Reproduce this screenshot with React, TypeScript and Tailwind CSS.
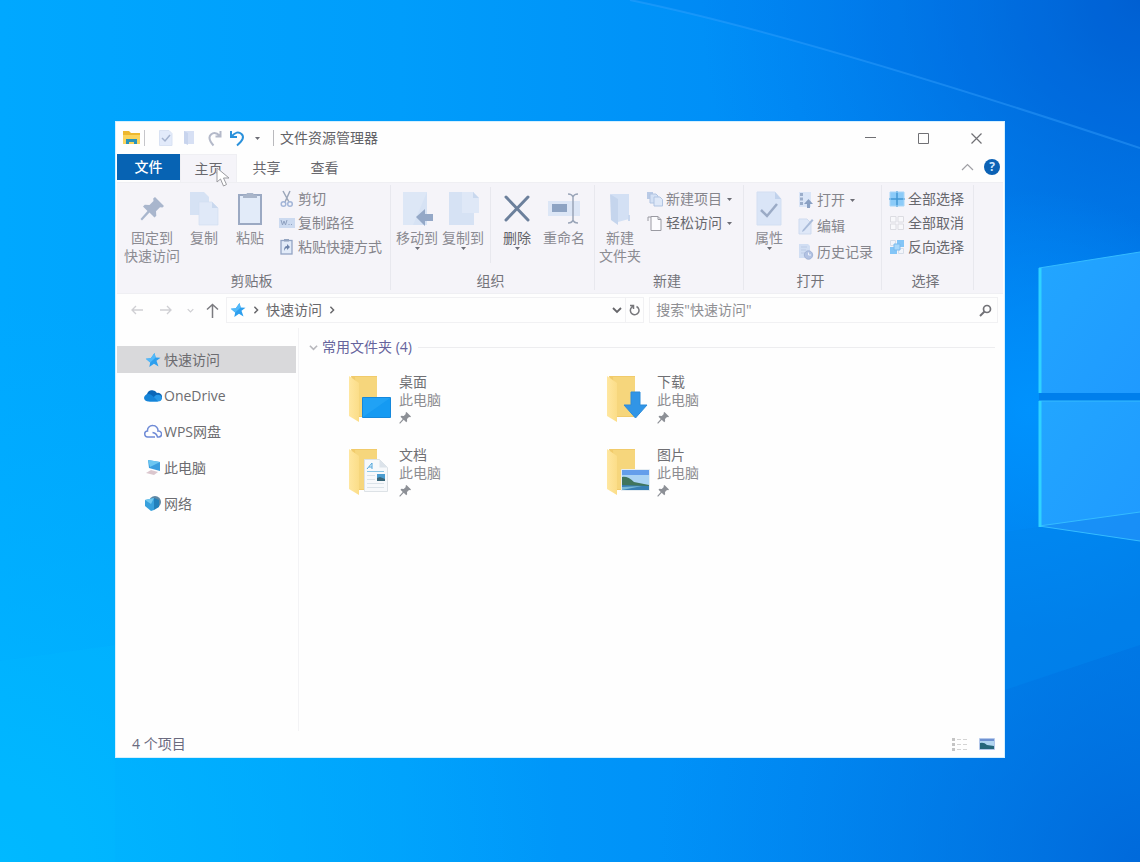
import { ReactNode, useState } from "react";

interface Children {
    children: ReactNode;
}

interface BigButtonProps {
    icon: ReactNode;
    label: string;
    second?: string;
    caret?: boolean;
    className: string;
    dark?: boolean;
}

interface SmallButtonProps {
    icon: ReactNode;
    label: string;
    caret?: boolean;
    dark?: boolean;
    className?: string;
}

const Wallpaper = () => (
    <svg
        className="absolute inset-0 h-full w-full"
        viewBox="0 0 1140 862"
        preserveAspectRatio="xMaxYMid slice"
        aria-hidden="true"
    >
        <defs>
            <linearGradient id="base" x1="0" y1="0" x2="1" y2="0">
                <stop offset="0" stopColor="#00a8ff" />
                <stop offset="0.35" stopColor="#009dfb" />
                <stop offset="0.7" stopColor="#008cf6" />
                <stop offset="1" stopColor="#007eec" />
            </linearGradient>
            <radialGradient id="corner" cx="1140" cy="0" r="440" gradientUnits="userSpaceOnUse">
                <stop offset="0" stopColor="#005acc" stopOpacity="0.85" />
                <stop offset="1" stopColor="#0070e8" stopOpacity="0" />
            </radialGradient>
            <radialGradient id="low" cx="1140" cy="862" r="480" gradientUnits="userSpaceOnUse">
                <stop offset="0" stopColor="#0066d8" stopOpacity="0.85" />
                <stop offset="1" stopColor="#007ce4" stopOpacity="0" />
            </radialGradient>
            <radialGradient id="glow" cx="0" cy="862" r="560" gradientUnits="userSpaceOnUse">
                <stop offset="0" stopColor="#00b8ff" />
                <stop offset="1" stopColor="#00b2ff" stopOpacity="0" />
            </radialGradient>
            <radialGradient id="halo" cx="1030" cy="410" r="220" gradientUnits="userSpaceOnUse">
                <stop offset="0" stopColor="#0094ff" stopOpacity="0.9" />
                <stop offset="1" stopColor="#0094ff" stopOpacity="0" />
            </radialGradient>
            <linearGradient id="pane" x1="0" y1="0" x2="1" y2="1">
                <stop offset="0" stopColor="#22a6ff" />
                <stop offset="1" stopColor="#1f9aff" />
            </linearGradient>
        </defs>
        <rect width="1140" height="862" fill="url(#base)" />
        <rect width="1140" height="862" fill="url(#glow)" />
        <rect width="1140" height="862" fill="url(#corner)" />
        <rect width="1140" height="862" fill="url(#low)" />
        <rect width="1140" height="862" fill="url(#halo)" />
        <path d="M630 0Q800 35 1140 148V0Z" fill="#0066dd" fillOpacity="0.12" />
        <path d="M630 0Q800 35 1140 148" fill="none" stroke="#3aa4ff" strokeOpacity="0.4" strokeWidth="2" />
        <path d="M0 661L115 645V862H0Z" fill="#00c0ff" fillOpacity="0.15" />
        <path d="M1005 532L1040 527L1140 541V645L1005 690Z" fill="#0086ee" fillOpacity="0.5" />
        <path d="M1039 268L1140 252V393H1039Z" fill="url(#pane)" />
        <path d="M1039 401H1140V541L1039 526Z" fill="url(#pane)" />
        <path d="M1039 526L1140 512V541Z" fill="#1487f2" fillOpacity="0.6" />
        <path d="M1039 393H1140V401H1039Z" fill="#007fec" />
        <path d="M1039 268L1140 252M1039 401H1140M1039 526L1140 512M1039 526L1140 541" fill="none" stroke="#35bcff" />
        <path d="M1040 268V393M1040 401V527" stroke="#2fd2ff" strokeWidth="3" />
    </svg>
);

const Star = () => (
    <svg width="16" height="16" viewBox="0 0 16 16">
        <path d="M9.5 1l1.2 4.5 4.8.2-4 3 2 5.8-4.5-2.8L4.3 15l.9-4.5L.8 6.8l5-.6z" fill="#2d9fee" />
        <path d="M9.5 1l1.2 4.5-5.5 5L.8 6.8l5-.6z" fill="#52b9fa" />
    </svg>
);

const Pin = ({ className, fill }: { className: string; fill: string }) => (
    <svg className={className} viewBox="0 0 24 24" fill={fill}>
        <path d="M15 0l9 9-1.500 1.500-2.500-.3-4 4 .3 4.500-1.800 1.800-5-5L2 23.500.5 22l7-8L3 9.500l1.800-1.800 4.700.3 4-4-.3-2.500z" />
    </svg>
);

const Caret = () => (
    <svg width="5" height="3" viewBox="0 0 5 3">
        <path d="M0 0h5L2.5 3z" fill="#6d6d75" />
    </svg>
);

const Chevron = ({ color, size, rotate }: { color: string; size: number; rotate?: string }) => (
    <svg width={size} height={size} viewBox="0 0 10 10" className={rotate}>
        <path d="M1 3l4 4 4-4" fill="none" stroke={color} strokeWidth="1.8" />
    </svg>
);

const CopyIcon = () => (
    <svg className="h-9 w-[30px]" viewBox="0 0 30 36">
        <path d="M1 1h14l5 5v18H1z" fill="#d6e2f4" />
        <path d="M10 11h13l6 6v17H10z" fill="#e0e9f8" stroke="#d3dff2" strokeWidth="0.7" />
        <path d="M23 11v6h6z" fill="#c9d8ee" />
    </svg>
);

const PasteIcon = () => (
    <svg className="h-9 w-[26px]" viewBox="0 0 26 36">
        <rect x="2" y="4" width="22" height="29" fill="#e2ebf9" stroke="#9ba9c3" strokeWidth="2" />
        <path d="M6 4h3l1-2h6l1 2h3v3H6z" fill="#a9b5ca" />
    </svg>
);

const MoveIcon = () => (
    <svg className="h-9 w-8" viewBox="0 0 32 36">
        <path d="M2 1h24v33H2z" fill="#d6e2f4" />
        <path d="M2 1h24L12 34H2z" fill="#dde7f6" />
        <path d="M15 26l9-8v5h8v7h-8v5z" fill="#94a8c7" />
    </svg>
);

const CopyToIcon = () => (
    <svg className="h-9 w-8" viewBox="0 0 32 36">
        <path d="M2 1h25v33H2z" fill="#d6e2f4" />
        <path d="M15 1h11l6 6v15H15z" fill="#dfe8f7" />
        <path d="M26 1v6h6z" fill="#c9d8ee" />
    </svg>
);

const DeleteIcon = () => (
    <svg className="h-9 w-[26px]" viewBox="0 0 26 36">
        <path d="M2 6l22 23M24 6L2 29" stroke="#6c809c" strokeWidth="3" strokeLinecap="round" />
    </svg>
);

const RenameIcon = () => (
    <svg className="h-9 w-[34px]" viewBox="0 0 34 36">
        <path d="M1 10h32v15H1z" fill="#dce6f6" />
        <path d="M5 13h15v8H5z" fill="#8da3c3" />
        <path d="M21 3q4 0 5 3 1-3 5-3M26 5v25M21 32q4 0 5-3 1 3 5 3" fill="none" stroke="#9aa5b8" strokeWidth="1.5" />
    </svg>
);

const NewFolderIcon = () => (
    <svg className="h-9 w-6" viewBox="0 0 24 36">
        <path d="M3 3h18v25l-11 3z" fill="#d3e0f4" />
        <path d="M20 24h2v6h-2z" fill="#c9d8ef" />
        <path d="M2 3l8 5v26l-7-5z" fill="#c5d5ed" />
    </svg>
);

const PropertiesIcon = () => (
    <svg className="h-9 w-[26px]" viewBox="0 0 26 36">
        <path d="M1 1h18l6 7v26H1z" fill="#dae5f7" stroke="#d3dff2" />
        <path d="M19 1v7h6z" fill="#c1d2ec" />
        <path d="M5 19l6 6 10-12" fill="none" stroke="#9babc6" strokeWidth="2.5" />
    </svg>
);

const ScissorsIcon = () => (
    <svg width="16" height="18" viewBox="0 0 16 18" fill="none">
        <path d="M4 1l6 11M11 1L6 12" stroke="#9ba6b9" strokeWidth="1.5" />
        <circle cx="4.5" cy="14" r="2.3" stroke="#a4b6d8" strokeWidth="1.5" />
        <circle cx="11" cy="14" r="2.3" stroke="#a4b6d8" strokeWidth="1.5" />
    </svg>
);

const PathIcon = () => (
    <svg width="16" height="12" viewBox="0 0 16 12">
        <path d="M0 1h16v10H0z" fill="#ccdaf0" />
        <path d="M2 3l1.5 5L5 4l1.5 4L8 3M9.5 7.500h1M12 7.500h1" stroke="#8fa1c0" fill="none" />
    </svg>
);

const PasteLinkIcon = () => (
    <svg width="16" height="18" viewBox="0 0 16 18">
        <rect x="2" y="2.5" width="11" height="13.5" fill="#e2ebf9" stroke="#92a4c4" strokeWidth="1.3" />
        <path d="M5 1h5v2.500H5z" fill="#93a4c0" />
        <path d="M5 13q0-5 3-5V6l3 3-3 3v-2q-2 0-3 3" fill="#6c83aa" />
    </svg>
);

const NewItemIcon = () => (
    <svg width="16" height="16" viewBox="0 0 16 16">
        <path d="M0 1h6v7H0z" fill="#b9cae6" />
        <path d="M3 3h6l2 2v7H3z" fill="#d4e1f5" stroke="#b1c4e2" />
        <path d="M7 6h6l2.5 2.5V15H7z" fill="#dee8f8" stroke="#b1c4e2" />
    </svg>
);

const EasyAccessIcon = () => (
    <svg width="16" height="18" viewBox="0 0 16 18">
        <path d="M4 2.500h7l3 3v11H4z" fill="#fcfcfe" stroke="#9a9aa2" />
        <path d="M11 2.500v3h3M1 7V3h3" fill="none" stroke="#9a9aa2" />
    </svg>
);

const OpenIcon = () => (
    <svg width="16" height="18" viewBox="0 0 16 18">
        <path d="M1 1h12v15H1z" fill="#dae5f7" />
        <path d="M2 2h3v3H2zM2 6.500h3v3H2zM2 11h3v3H2z" fill="#9badca" />
        <path d="M10.5 8l4.5 5h-3v4H9v-4H6z" fill="#8aa0c3" />
    </svg>
);

const EditIcon = () => (
    <svg width="16" height="18" viewBox="0 0 16 18">
        <path d="M1 2h8l4 4v11H1z" fill="#dfe8f8" stroke="#cfdbef" />
        <path d="M14 2l1.5 1.5L6 14l-2 1 .6-2z" fill="#a9bbd9" />
    </svg>
);

const HistoryIcon = () => (
    <svg width="16" height="18" viewBox="0 0 16 18">
        <path d="M1 1h9l2 2v12H1z" fill="#d1def3" />
        <path d="M3 4h6M3 7h5M3 10h4" stroke="#bccbe5" />
        <circle cx="10.5" cy="12" r="4.2" fill="#b2c2e3" stroke="#a3b4d6" />
        <path d="M10.5 9.500V12H13" fill="none" stroke="#eff3fb" />
    </svg>
);

const SelectAllIcon = () => (
    <svg width="16" height="16" viewBox="0 0 16 16">
        <path d="M1 1h14v14H1z" fill="#8ccbf8" />
        <path d="M8 0v16M0 8h16" stroke="#4398d3" strokeWidth="1.5" />
        <path d="M1 1h14v14H1z" fill="none" stroke="#a8d6f8" />
    </svg>
);

const SelectNoneIcon = () => (
    <svg width="16" height="16" viewBox="0 0 16 16" fill="#f8f8fb" stroke="#dcdce2">
        <path d="M1.500 1.500h5.500v5.500h-5.500zM9 1.500h5.500v5.500H9zM1.500 9h5.500v5.500h-5.500zM9 9h5.500v5.500H9z" />
    </svg>
);

const InvertIcon = () => (
    <svg width="16" height="16" viewBox="0 0 16 16">
        <path d="M1.500 1.500h5v5h-5zM9.500 9.500h5v5h-5z" fill="#f2f5fb" stroke="#d6dde8" />
        <path d="M8 1h7v7H8zM1 8h7v7H1z" fill="#83c5f7" />
        <path d="M5 5h6v6H5z" fill="#a9d8fa" stroke="#79baee" />
    </svg>
);

const FolderArt = ({ children }: Children) => (
    <svg className="shrink-0" width="43" height="50" viewBox="0 -1 43 50">
        <defs>
            <linearGradient id="flap" x1="0" y1="0" x2="1" y2="0">
                <stop offset="0" stopColor="#ffe7a0" />
                <stop offset="1" stopColor="#fbdd88" />
            </linearGradient>
        </defs>
        <path d="M2 2h26v41H9z" fill="#f1cb6b" />
        <path d="M6 3h22v39H9z" fill="#f6d67c" />
        <path d="M0 2l10 7v39l-10-6z" fill="url(#flap)" />
        {children}
    </svg>
);

const DesktopFolder = () => (
    <FolderArt>
        <path d="M13.500 23.500h28v20h-28z" fill="#159af2" stroke="#1588dc" />
        <path d="M14 43V24h27z" fill="#32aefb" fillOpacity="0.4" />
    </FolderArt>
);

const DownloadFolder = () => (
    <FolderArt>
        <path d="M24 18h9v13h7L28.500 44 17 31h7z" fill="#3195e6" stroke="#2d8cda" />
    </FolderArt>
);

const DocumentFolder = () => (
    <FolderArt>
        <path d="M15.500 12.500h15l8 8v24h-23z" fill="#f7f9fb" stroke="#dde2e6" />
        <path d="M30.500 12.500v8h8z" fill="#dce3ea" />
        <path d="M18 22l5-6v6M20 20h3" fill="none" stroke="#52a7dc" />
        <path d="M18 24.500h17" stroke="#8bc6e5" />
        <path d="M18 28.500h8M18 32.500h8M18 36.500h17M18 40.500h17" stroke="#dbe3e9" />
        <path d="M28 27h8v7h-8z" fill="#4b9dd0" />
        <path d="M28 34v-3l3-1 5 2v2z" fill="#396678" />
    </FolderArt>
);

const PictureFolder = () => (
    <FolderArt>
        <path d="M14.500 22.500h28v21h-28z" fill="#a9d3f4" stroke="#e6edf2" />
        <path d="M15 23h27v5H15z" fill="#639eeb" />
        <path d="M15 30q6-1 12 5l15 3v3H15z" fill="#40755d" />
        <path d="M15 38l27 1v4H15z" fill="#377fb4" />
        <path d="M15 40l20-1-20 4z" fill="#79b9d6" />
    </FolderArt>
);

const OneDriveIcon = () => (
    <svg width="18" height="14" viewBox="0 0 18 14">
        <path d="M4 12A4 4 0 0 1 3 5a5.500 5.500 0 0 1 10-1 4 4 0 0 1 2 8z" fill="#0a66b8" />
        <path d="M5 12.500l7-6.500q5-1 6 3-.5 3.500-4 3.500z" fill="#2798e8" />
        <path d="M0 8.500q1-3.500 5-3.500 4 1 9 7.500H4Q0 12 0 8.500z" fill="#1584d8" />
    </svg>
);

const WpsIcon = () => (
    <svg width="18" height="15" viewBox="0 0 18 15" fill="none" stroke="#6f8bd6" strokeWidth="1.5">
        <path d="M11 13H4a3 3 0 0 1-.5-6A5 5 0 0 1 9 1.500a5 5 0 0 1 5 5.500 3 3 0 0 1 1 6h-1.500q-1-4-5-4.500" />
    </svg>
);

const ComputerIcon = () => (
    <svg width="18" height="17" viewBox="0 0 18 17">
        <path d="M4 1l12 2v9L5 9z" fill="#3a9edf" />
        <path d="M4 1l12 2L6 8z" fill="#6bc6f1" />
        <path d="M2 14l5-3 7 2-4 3z" fill="#dbc7ce" />
    </svg>
);

const NetworkIcon = () => (
    <svg width="18" height="17" viewBox="0 0 18 17">
        <circle cx="11" cy="7" r="6" fill="#5e87a4" />
        <path d="M1 5l9-2v12l-3 1-6-5z" fill="#38a1dd" />
        <path d="M10 3l5 2v7l-5 3z" fill="#2280bb" />
        <path d="M1 5l9-2-3 6z" fill="#72c8ef" />
    </svg>
);

const ViewThumb = () => (
    <svg width="16" height="12" viewBox="0 0 16 12">
        <path d="M.5.500h15v11H.5z" fill="#b2d6f1" stroke="#b4c8ea" />
        <path d="M1 1h14v2H1z" fill="#6f92d2" />
        <path d="M1 5q4-1 7 2l7 1v3H1z" fill="#26677a" />
    </svg>
);

const BigButton = ({ icon, label, second, caret, className, dark }: BigButtonProps) => (
    <button
        type="button"
        className={`flex flex-col items-center pt-1.5 whitespace-nowrap leading-[18px] ${
            dark ? "text-[#626268]" : "text-[#8b8b92]"
        } ${className}`}
    >
        <span className="mb-0.5 flex h-9 items-center">{icon}</span>
        <span>{label}</span>
        {second && <span>{second}</span>}
        {caret && <Caret />}
    </button>
);

const SmallButton = ({ icon, label, caret, dark, className = "h-6" }: SmallButtonProps) => (
    <button
        type="button"
        className={`flex items-center gap-[3px] whitespace-nowrap ${
            dark ? "text-[#68686e]" : "text-[#85858c]"
        } ${className}`}
    >
        <span className="flex w-4 justify-center">{icon}</span>
        {label}
        {caret && (
            <span className="ml-0.5">
                <Caret />
            </span>
        )}
    </button>
);

const Group = ({ title, width, children }: Children & { title: string; width: string }) => (
    <section
        className={`flex shrink-0 flex-col justify-between border-r border-[#e8e8ee] ${width}`}
    >
        <div className="flex items-start">{children}</div>
        <h2 className="pr-1 text-center leading-[18px] text-[#737379]">{title}</h2>
    </section>
);

const TitleBar = () => (
    <header className="flex h-8 items-center">
        <svg className="ml-1.5" width="17" height="16" viewBox="0 0 17 16">
            <path d="M0 1h6l2 2h9v11H0z" fill="#eeb82f" />
            <path d="M0 5h17v9H0z" fill="#fbd45d" />
            <path d="M3 14V9h11v5h-3v-2H6v2z" fill="#2b93b9" />
        </svg>
        <span className="ml-1 h-4 w-px bg-[#c6c6ca]" />
        <button type="button" aria-label="属性" className="ml-3.5">
            <svg width="14" height="16" viewBox="0 0 14 16">
                <path d="M.5.500H10l3 3v12H.5z" fill="#e2eafa" stroke="#d9e2f3" />
                <path d="M3 8l3 3 5-6" fill="none" stroke="#a4b2ce" strokeWidth="1.5" />
            </svg>
        </button>
        <button type="button" aria-label="新建文件夹" className="ml-2.5">
            <svg width="12" height="16" viewBox="0 0 12 16">
                <path d="M1 1h10v13H1z" fill="#d7e0f4" />
                <path d="M1 1l4 2v12l-4-2z" fill="#c8d4ed" />
            </svg>
        </button>
        <button type="button" aria-label="恢复" className="ml-3">
            <svg width="16" height="17" viewBox="0 0 16 17" fill="none" stroke="#b4b9c9" strokeWidth="2">
                <path d="M13.500 1v5.500H8.500M13 6Q8 1 4 4.500T6.500 15.500" />
            </svg>
        </button>
        <button type="button" aria-label="撤消" className="ml-1.5">
            <svg width="17" height="17" viewBox="0 0 17 17" fill="none" stroke="#2b91db" strokeWidth="2">
                <path d="M2 1v6h6M2.500 6.500Q8 0 12.500 4T8 15.500" />
            </svg>
        </button>
        <button type="button" aria-label="自定义快速访问工具栏" className="ml-[9px]">
            <Caret />
        </button>
        <span className="ml-[13px] h-4 w-px bg-[#b9b9bd]" />
        <h1 className="ml-1.5 flex-1 text-[#626266]">文件资源管理器</h1>
        <div className="flex h-full text-[#707074]">
            <button type="button" aria-label="最小化" className="flex w-[53px] items-center justify-center">
                <svg width="11" height="11" viewBox="0 0 11 11">
                    <path d="M0 4.500h11" stroke="currentColor" />
                </svg>
            </button>
            <button type="button" aria-label="最大化" className="flex w-[53px] items-center justify-center">
                <svg width="11" height="11" viewBox="0 0 11 11">
                    <path d="M.5.500h10v10H.5z" fill="none" stroke="currentColor" />
                </svg>
            </button>
            <button type="button" aria-label="关闭" className="flex w-[53px] items-center justify-center">
                <svg width="11" height="11" viewBox="0 0 11 11">
                    <path d="M.5.500l10 10M10.500.500l-10 10" stroke="currentColor" strokeWidth="1.2" />
                </svg>
            </button>
        </div>
    </header>
);

const Tabs = () => (
    <nav className="flex h-7 items-start text-[#68686d]">
        <button type="button" className="h-[26px] w-[63px] bg-[#0763b3] font-medium text-white">
            文件
        </button>
        <button
            type="button"
            className="relative h-7 w-[57px] border-x border-t border-[#efeff3] bg-[#f5f4f9]"
        >
            主页
            <svg
                className="absolute top-3 left-[35px]"
                width="15"
                height="20"
                viewBox="0 0 15 20"
                aria-hidden="true"
            >
                <path d="M1 1v14l3.500-3 3 7 3-1.500-3-6.500H13z" fill="#fff" stroke="#9b9ba0" />
            </svg>
        </button>
        <button type="button" className="h-7 w-[59px]">
            共享
        </button>
        <button type="button" className="h-7 w-[57px]">
            查看
        </button>
        <div className="ml-auto flex h-[26px] items-center gap-2.5 pr-[3px]">
            <button type="button" aria-label="最小化功能区">
                <svg width="13" height="8" viewBox="0 0 13 8">
                    <path d="M1 7l5.500-5.500L12 7" fill="none" stroke="#a0a0a5" strokeWidth="1.2" />
                </svg>
            </button>
            <button
                type="button"
                aria-label="帮助"
                className="h-4 w-4 rounded-full bg-[#0c62b5] text-[12px] leading-4 font-bold text-[#cfe8ff]"
            >
                ?
            </button>
        </div>
    </nav>
);

const Ribbon = () => (
    <div className="flex h-28 border-y border-[#efeff3] bg-[#f5f4f9] pt-0.5 pb-[3px]">
        <Group title="剪贴板" width="w-[274px]">
            <BigButton
                className="w-[70px]"
                icon={<Pin className="h-6 w-6" fill="#a9b6cd" />}
                label="固定到"
                second="快速访问"
            />
            <BigButton className="w-[34px]" icon={<CopyIcon />} label="复制" />
            <BigButton className="w-[58px]" icon={<PasteIcon />} label="粘贴" />
            <div className="flex flex-col pt-0.5">
                <SmallButton icon={<ScissorsIcon />} label="剪切" />
                <SmallButton icon={<PathIcon />} label="复制路径" />
                <SmallButton icon={<PasteLinkIcon />} label="粘贴快捷方式" />
            </div>
        </Group>
        <Group title="组织" width="w-[204px]">
            <BigButton className="ml-1 w-11" icon={<MoveIcon />} label="移动到" caret />
            <BigButton className="w-12" icon={<CopyToIcon />} label="复制到" caret />
            <span className="mt-0.5 ml-[3px] h-[76px] w-px bg-[#e8e8ee]" />
            <BigButton className="w-[52px]" icon={<DeleteIcon />} label="删除" caret dark />
            <BigButton className="w-[42px]" icon={<RenameIcon />} label="重命名" />
        </Group>
        <Group title="新建" width="w-[149px]">
            <BigButton className="w-[50px]" icon={<NewFolderIcon />} label="新建" second="文件夹" />
            <div className="flex flex-col pt-0.5 pl-0.5">
                <SmallButton icon={<NewItemIcon />} label="新建项目" caret />
                <SmallButton icon={<EasyAccessIcon />} label="轻松访问" caret dark />
            </div>
        </Group>
        <Group title="打开" width="w-[138px]">
            <BigButton className="w-[50px]" icon={<PropertiesIcon />} label="属性" caret />
            <div className="flex flex-col pt-0.5 pl-1">
                <SmallButton className="h-[26px]" icon={<OpenIcon />} label="打开" caret />
                <SmallButton className="h-[26px]" icon={<EditIcon />} label="编辑" />
                <SmallButton className="h-[26px]" icon={<HistoryIcon />} label="历史记录" />
            </div>
        </Group>
        <Group title="选择" width="w-[92px]">
            <div className="flex flex-col pt-0.5 pl-[7px]">
                <SmallButton icon={<SelectAllIcon />} label="全部选择" dark />
                <SmallButton icon={<SelectNoneIcon />} label="全部取消" dark />
                <SmallButton icon={<InvertIcon />} label="反向选择" dark />
            </div>
        </Group>
    </div>
);

const AddressRow = () => {
    const [query, setQuery] = useState("");

    return (
        <div className="flex items-center pt-[3px] pr-[5px] pb-[5px]">
            <div className="flex w-[109px] shrink-0 items-center pl-3.5">
                <button type="button" aria-label="后退">
                    <svg width="12" height="10" viewBox="0 0 12 10" fill="none" stroke="#cfcfd3" strokeWidth="1.3">
                        <path d="M5 1L1 5l4 4M1 5h11" />
                    </svg>
                </button>
                <button type="button" aria-label="前进" className="ml-[17px]">
                    <svg width="12" height="10" viewBox="0 0 12 10" fill="none" stroke="#cfcfd3" strokeWidth="1.3">
                        <path d="M7 1l4 4-4 4M11 5H0" />
                    </svg>
                </button>
                <button type="button" aria-label="最近浏览的位置" className="ml-[15px]">
                    <Chevron color="#cfcfd3" size={7} />
                </button>
                <button type="button" aria-label="上移" className="ml-3">
                    <svg width="13" height="15" viewBox="0 0 13 15" fill="none" stroke="#7b7b80" strokeWidth="1.5">
                        <path d="M1 6.500l5.500-5 5.500 5M6.500 2v13" />
                    </svg>
                </button>
            </div>
            <div className="grid min-w-0 flex-1 grid-cols-[minmax(0,6fr)_minmax(0,5fr)] gap-[5px]">
                <div className="flex h-[26px] items-center border border-[#f1f1f3] pl-[3px] text-[#68686c]">
                    <Star />
                    <span className="ml-1.5">
                        <Chevron color="#66666a" size={8} rotate="-rotate-90" />
                    </span>
                    <button type="button" className="ml-1.5">
                        快速访问
                    </button>
                    <span className="ml-1.5">
                        <Chevron color="#66666a" size={8} rotate="-rotate-90" />
                    </span>
                    <button type="button" aria-label="以前的位置" className="mr-[3px] ml-auto">
                        <Chevron color="#66666a" size={10} />
                    </button>
                    <button
                        type="button"
                        aria-label="刷新"
                        className="flex h-full w-[18px] items-center justify-center border-l border-[#f1f1f3]"
                    >
                        <svg width="11" height="12" viewBox="0 0 11 12" fill="none" stroke="#77777b" strokeWidth="1.5">
                            <path d="M1 1.500h3.500V5M7.500 2.500A4.300 4.300 0 1 1 2.500 3.500L4 2" />
                        </svg>
                    </button>
                </div>
                <div className="flex h-[26px] items-center border border-[#f1f1f3] pr-[5px] pl-1.5">
                    <input
                        type="text"
                        aria-label="搜索"
                        className="min-w-0 flex-1 bg-transparent text-[#626266] outline-none placeholder:text-[#8f8f93]"
                        placeholder={'搜索"快速访问"'}
                        value={query}
                        onChange={(e) => setQuery(e.target.value)}
                    />
                    <svg width="13" height="13" viewBox="0 0 13 13" fill="none" stroke="#727277">
                        <circle cx="8" cy="5" r="3.5" strokeWidth="1.7" />
                        <path d="M5.5 7.500L1 12" strokeWidth="2" />
                    </svg>
                </div>
            </div>
        </div>
    );
};

const places = [
    { name: "快速访问", icon: <Star />, active: true },
    { name: "OneDrive", icon: <OneDriveIcon />, active: false },
    { name: "WPS网盘", icon: <WpsIcon />, active: false },
    { name: "此电脑", icon: <ComputerIcon />, active: false },
    { name: "网络", icon: <NetworkIcon />, active: false },
];

const folders = [
    { name: "桌面", art: <DesktopFolder /> },
    { name: "下载", art: <DownloadFolder /> },
    { name: "文档", art: <DocumentFolder /> },
    { name: "图片", art: <PictureFolder /> },
];

const App = () => {
    return (
        <div className="relative flex min-h-screen bg-[#009cfb] pt-[121px] pr-[135px] pb-[104px] pl-[115px] font-['Open_Sans','Noto_Sans_CJK_SC',sans-serif] text-[14px] leading-[18px]">
            <Wallpaper />
            <main className="relative flex min-w-0 flex-1 flex-col border border-[#d5f0ff] bg-[#fefefe] px-px">
                <TitleBar />
                <Tabs />
                <Ribbon />
                <AddressRow />
                <div className="flex flex-1">
                    <aside className="flex w-[182px] shrink-0 flex-col gap-[9px] border-r border-[#f3f3f5] pt-[18px] pr-0.5">
                        {places.map((place) => (
                            <a
                                key={place.name}
                                href="#"
                                className={`flex h-[27px] items-center gap-0.5 pl-[27px] text-[#6c6c70] ${
                                    place.active ? "bg-[#d9d9db]" : ""
                                }`}
                            >
                                <span className="flex w-[18px] justify-center">{place.icon}</span>
                                {place.name}
                            </a>
                        ))}
                    </aside>
                    <section className="min-w-0 flex-1 pt-2.5 pr-2 pl-2.5">
                        <div className="flex items-center">
                            <Chevron color="#b8b8bd" size={9} />
                            <h2 className="ml-1 text-[#65639c]">常用文件夹 (4)</h2>
                            <span className="ml-1.5 h-px flex-1 bg-[#ededef]" />
                        </div>
                        <div className="mt-[15px] grid grid-cols-[repeat(auto-fill,258px)] gap-y-[19px] pl-10">
                            {folders.map((folder) => (
                                <button
                                    key={folder.name}
                                    type="button"
                                    className="flex h-[54px] items-center gap-[7px] text-left text-[#8d8d91]"
                                >
                                    {folder.art}
                                    <span className="flex flex-col">
                                        <span className="text-[#6f6f73]">{folder.name}</span>
                                        <span>此电脑</span>
                                        <Pin className="mt-[3px] h-3 w-3" fill="#8d9096" />
                                    </span>
                                </button>
                            ))}
                        </div>
                    </section>
                </div>
                <footer className="flex h-[26px] items-center gap-[11px] pr-2 pl-[15px] text-[#6a6a7e]">
                    <span className="flex-1">4 个项目</span>
                    <button type="button" aria-label="详细信息">
                        <svg width="16" height="14" viewBox="0 0 16 14">
                            <path d="M0 1h3v3H0zM0 6h3v3H0zM0 11h3v3H0z" fill="#c4c4c4" />
                            <path d="M5 2.500h4M11 2.500h4M5 7.500h4M11 7.500h4M5 12.500h4M11 12.500h4" stroke="#d4d4d4" />
                        </svg>
                    </button>
                    <button type="button" aria-label="大缩略图">
                        <ViewThumb />
                    </button>
                </footer>
            </main>
        </div>
    );
};

export default App;
